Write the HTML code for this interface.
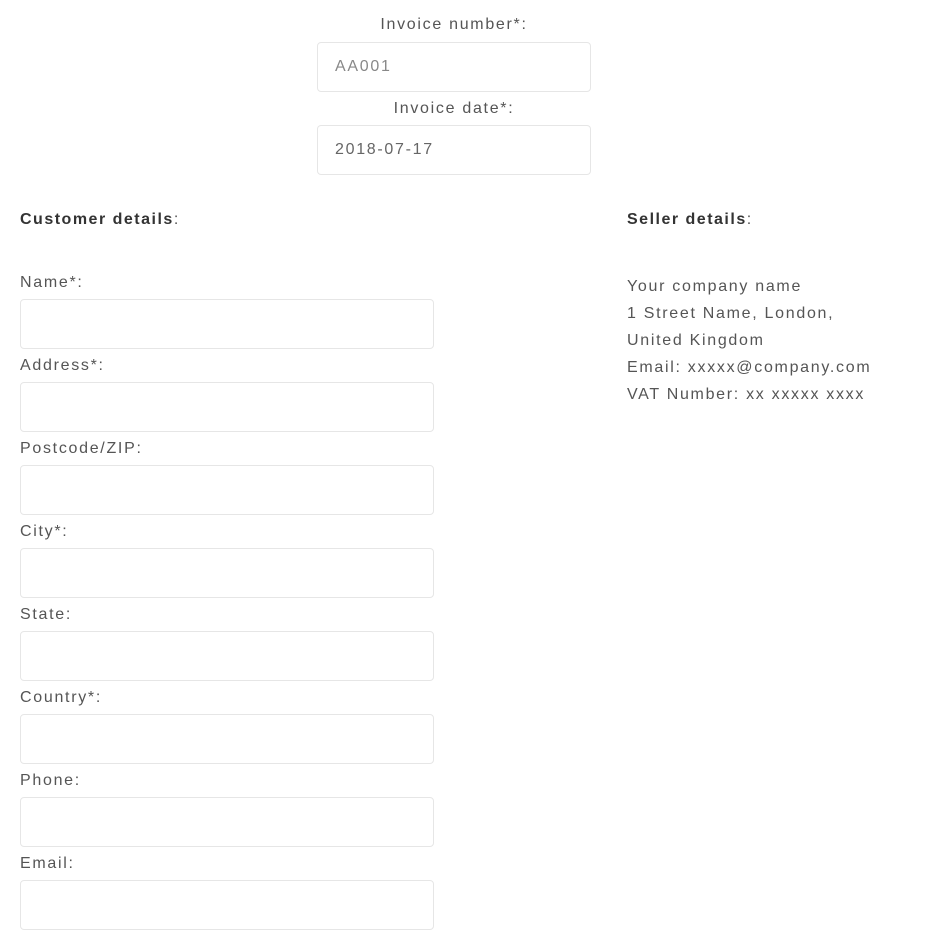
<!DOCTYPE html>
<html><head><style>
body{margin:0;width:928px;height:952px;background:#fff;font-family:"Liberation Sans",sans-serif;color:#555;font-size:16px;letter-spacing:1.7px;position:relative;overflow:hidden}
.a{position:absolute;white-space:nowrap}
.box{position:absolute;border:1px solid #e6e6e6;border-radius:4px;box-sizing:border-box;background:#fff}
.c{text-align:center}
b{color:#333;font-weight:bold;letter-spacing:1.5px}
</style></head><body>
<div class="a c" style="left:317px;width:274px;top:16px">Invoice number*:</div>
<div class="box" style="left:317px;top:42px;width:274px;height:50px"></div>
<div class="a" style="left:335px;top:58px;color:#888">AA001</div>
<div class="a c" style="left:317px;width:274px;top:100px">Invoice date*:</div>
<div class="box" style="left:317px;top:125px;width:274px;height:50px"></div>
<div class="a" style="left:335px;top:141px;color:#666">2018-07-17</div>

<div class="a" style="left:20px;top:211px"><b>Customer details</b>:</div>
<div class="a" style="left:627px;top:211px"><b>Seller details</b>:</div>

<div class="a" style="left:627px;top:273px;line-height:27px">Your company name<br>1 Street Name, London,<br>United Kingdom<br>Email: xxxxx@company.com<br>VAT Number: xx xxxxx xxxx</div>

<div class="a" style="left:20px;top:274px">Name*:</div>
<div class="box" style="left:20px;top:299px;width:414px;height:50px"></div>
<div class="a" style="left:20px;top:357px">Address*:</div>
<div class="box" style="left:20px;top:382px;width:414px;height:50px"></div>
<div class="a" style="left:20px;top:440px">Postcode/ZIP:</div>
<div class="box" style="left:20px;top:465px;width:414px;height:50px"></div>
<div class="a" style="left:20px;top:523px">City*:</div>
<div class="box" style="left:20px;top:548px;width:414px;height:50px"></div>
<div class="a" style="left:20px;top:606px">State:</div>
<div class="box" style="left:20px;top:631px;width:414px;height:50px"></div>
<div class="a" style="left:20px;top:689px">Country*:</div>
<div class="box" style="left:20px;top:714px;width:414px;height:50px"></div>
<div class="a" style="left:20px;top:772px">Phone:</div>
<div class="box" style="left:20px;top:797px;width:414px;height:50px"></div>
<div class="a" style="left:20px;top:855px">Email:</div>
<div class="box" style="left:20px;top:880px;width:414px;height:50px"></div>
</body></html>
